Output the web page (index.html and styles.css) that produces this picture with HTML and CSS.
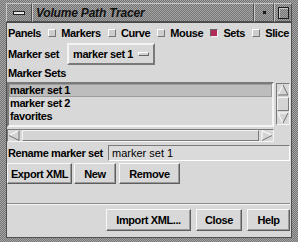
FILE: index.html
```html
<!DOCTYPE html>
<html>
<head>
<title>Volume Path Tracer</title>
<link rel="stylesheet" href="styles.css">
</head>
<body>

<div class="window">
    <div class="titlebar">
        <div class="tb-btn menu-btn"><span class="menu-bar"></span></div>
        <div class="tb-btn title">Volume Path Tracer</div>
        <div class="tb-btn min-btn"><span class="min-dot"></span></div>
        <div class="tb-btn max-btn"><span class="max-box"></span></div>
    </div>

    <div class="content">
        <div class="toggles">
            <span class="lbl">Panels</span>
            <span class="toggle"><span class="check"></span>Markers</span>
            <span class="toggle"><span class="check"></span>Curve</span>
            <span class="toggle"><span class="check"></span>Mouse</span>
            <span class="toggle"><span class="check on"></span>Sets</span>
            <span class="toggle"><span class="check"></span>Slice</span>
        </div>

        <div class="marker-row">
            <span class="lbl marker-lbl">Marker set</span>
            <div class="option-menu">marker set 1<span class="option-bar"></span></div>
        </div>

        <div class="lbl sets-lbl">Marker Sets</div>

        <div class="list-area">
            <ul class="list">
                <li class="selected">marker set 1</li>
                <li>marker set 2</li>
                <li>favorites</li>
            </ul>
            <div class="vscroll">
                <svg class="arrow" width="12" height="12" viewBox="0 0 12 12">
                    <polygon points="6,1 11,11 1,11" fill="#d4d4d4"/>
                    <line x1="6" y1="1" x2="1" y2="11" stroke="#fff"/>
                    <line x1="6" y1="1" x2="11" y2="11" stroke="#707070"/>
                    <line x1="1" y1="11" x2="11" y2="11" stroke="#707070"/>
                </svg>
                <div class="thumb vthumb"></div>
                <svg class="arrow" width="12" height="12" viewBox="0 0 12 12">
                    <polygon points="1,1 11,1 6,11" fill="#d4d4d4"/>
                    <line x1="1" y1="1" x2="11" y2="1" stroke="#fff"/>
                    <line x1="1" y1="1" x2="6" y2="11" stroke="#fff"/>
                    <line x1="11" y1="1" x2="6" y2="11" stroke="#707070"/>
                </svg>
            </div>
        </div>

        <div class="hscroll">
            <svg class="arrow" width="12" height="11" viewBox="0 0 12 11">
                <polygon points="1,5.5 11,1 11,10" fill="#d4d4d4"/>
                <line x1="1" y1="5.5" x2="11" y2="0.5" stroke="#fff"/>
                <line x1="1" y1="5.5" x2="11" y2="10.5" stroke="#707070"/>
                <line x1="11" y1="0.5" x2="11" y2="10.5" stroke="#707070"/>
            </svg>
            <div class="thumb hthumb"></div>
            <svg class="arrow" width="12" height="11" viewBox="0 0 12 11">
                <polygon points="1,1 11,5.5 1,10" fill="#d4d4d4"/>
                <line x1="1" y1="0.5" x2="1" y2="10.5" stroke="#fff"/>
                <line x1="1" y1="0.5" x2="11" y2="5.5" stroke="#fff"/>
                <line x1="11" y1="5.5" x2="1" y2="10.5" stroke="#707070"/>
            </svg>
        </div>

        <div class="rename-row">
            <span class="lbl rename-lbl">Rename marker set</span>
            <div class="field">marker set 1</div>
        </div>

        <div class="btn-row">
            <button class="btn btn-export">Export XML</button>
            <button class="btn btn-new">New</button>
            <button class="btn btn-remove">Remove</button>
        </div>

        <div class="separator"></div>

        <div class="bottom-row">
            <button class="btn btn-import">Import XML...</button>
            <button class="btn btn-close">Close</button>
            <button class="btn btn-help">Help</button>
        </div>
    </div>
</div>

</body>
</html>
```

FILE: styles.css
```css
/* Motif style dialog */
body {
    margin: 0;
    font-family: "Liberation Sans", Arial, sans-serif;
    font-size: 11px;
    font-weight: bold;
    letter-spacing: -0.4px;
    color: #000;
}

.window {
    width: 298px;
    height: 242px;
    box-sizing: border-box;
    padding: 3px 6px 4px 6px;
    display: flex;
    flex-direction: column;
    background-color: #8c8c8c;
    background-image: repeating-conic-gradient(#747474 0 25%, #a6a6a6 0 50%);
    background-size: 2px 2px;
}

/* title bar */
.titlebar {
    height: 20px;
    display: flex;
    border-bottom: 1px solid #4a4a4a;
    box-sizing: border-box;
}

.tb-btn {
    box-sizing: border-box;
    border: 1px solid;
    border-color: #c8c8c8 #505050 #505050 #c8c8c8;
    display: flex;
    align-items: center;
    justify-content: center;
}

.menu-btn {
    width: 26px;
}

.menu-bar {
    width: 12px;
    height: 4px;
    box-sizing: border-box;
    border: 1px solid;
    border-color: #202020;
    background: #e8e8e8;
}

.title {
    flex: 1;
    justify-content: flex-start;
    padding-left: 3px;
    font-size: 12px;
    font-style: italic;
    letter-spacing: -0.2px;
    color: #111;
}

.min-btn {
    width: 20px;
}

.min-dot {
    width: 3px;
    height: 3px;
    background: #1a1a1a;
}

.max-btn {
    width: 18px;
}

.max-box {
    width: 11px;
    height: 12px;
    box-sizing: border-box;
    border: 1px solid #1a1a1a;
    box-shadow: inset 1px 1px #c8c8c8;
}

/* main area */
.content {
    flex: 1;
    background: #d8d8d8;
    display: flex;
    flex-direction: column;
    padding-right: 1px;
    border: 1px solid #505050;
    border-top: none;
}

.lbl {
    padding-left: 1px;
}

.toggles {
    height: 20px;
    display: flex;
    align-items: center;
    justify-content: space-between;
    padding-right: 1px;
}

.toggle {
    display: flex;
    align-items: center;
    gap: 5px;
}

.check {
    width: 8px;
    height: 8px;
    box-sizing: border-box;
    border: 1px solid;
    border-color: #fff #777 #777 #fff;
    background: #cdcdcd;
}

.check.on {
    border-color: #666 #f4f4f4 #f4f4f4 #666;
    background: #b22a5a;
}

.marker-row {
    height: 22px;
    display: flex;
    align-items: center;
}

.marker-lbl {
    width: 59px;
}

.option-menu {
    width: 88px;
    height: 22px;
    box-sizing: border-box;
    border: 2px solid;
    border-color: #f4f4f4 #7a7a7a #7a7a7a #f4f4f4;
    display: flex;
    align-items: center;
    justify-content: space-between;
    padding: 0 4px;
}

.option-bar {
    width: 11px;
    height: 4px;
    box-sizing: border-box;
    border: 1px solid;
    border-color: #fff #666 #666 #fff;
    background: #d0d0d0;
}

.sets-lbl {
    height: 17px;
    line-height: 17px;
}

/* list with scrollbars */
.list-area {
    height: 45px;
    display: flex;
}

.list {
    width: 267px;
    box-sizing: border-box;
    margin: 0;
    padding: 0;
    list-style: none;
    border: 2px solid;
    border-color: #7a7a7a #f4f4f4 #f4f4f4 #7a7a7a;
}

.list li {
    height: 13px;
    line-height: 13px;
    padding-left: 1px;
}

.list li.selected {
    background: #bdbdbd;
    box-shadow: inset 0 0 0 1px #9c9c9c;
}

.vscroll {
    width: 14px;
    height: 42px;
    margin: 1px 0 0 2px;
    box-sizing: border-box;
    border: 1px solid;
    border-color: #7a7a7a #f4f4f4 #f4f4f4 #7a7a7a;
    display: flex;
    flex-direction: column;
}

.arrow {
    display: block;
    flex: none;
}

.thumb {
    flex: 1;
    box-sizing: border-box;
    border: 1px solid;
    border-color: #f4f4f4 #7a7a7a #7a7a7a #f4f4f4;
    background: #d4d4d4;
}

.vthumb {
    margin: 1px 0;
}

.hscroll {
    width: 267px;
    height: 13px;
    margin-top: 2px;
    box-sizing: border-box;
    border: 1px solid;
    border-color: #7a7a7a #f4f4f4 #f4f4f4 #7a7a7a;
    display: flex;
}

.hthumb {
    margin: 0 2px;
}

.rename-row {
    height: 18px;
    margin-top: 2px;
    display: flex;
    align-items: center;
}

.rename-lbl {
    width: 100px;
}

.field {
    flex: 1;
    height: 16px;
    line-height: 14px;
    box-sizing: border-box;
    border: 1px solid;
    border-color: #7a7a7a #fff #fff #7a7a7a;
    background: #dadada;
    padding-left: 3px;
    font-weight: normal;
    letter-spacing: 0;
}

/* push buttons */
.btn {
    box-sizing: border-box;
    padding: 0;
    font-family: "Liberation Sans", Arial, sans-serif;
    font-size: 11px;
    font-weight: bold;
    letter-spacing: -0.4px;
    color: #000;
    background: #d8d8d8;
    border: 1px solid;
    border-color: #f8f8f8 #5e5e5e #5e5e5e #f8f8f8;
    box-shadow: inset -1px -1px #9a9a9a;
}

.btn-row {
    height: 21px;
    margin-top: 1px;
    display: flex;
}

.btn-row .btn {
    height: 21px;
}

.btn-export {
    width: 65px;
}

.btn-new {
    width: 42px;
    margin-left: 2px;
}

.btn-remove {
    width: 61px;
    margin-left: 3px;
}

.separator {
    margin-top: auto;
    height: 2px;
    box-sizing: border-box;
    border-top: 1px solid #8a8a8a;
    border-bottom: 1px solid #f4f4f4;
}

.bottom-row {
    height: 22px;
    margin: 4px 0 6px 0;
    display: flex;
    justify-content: flex-end;
    gap: 5px;
}

.bottom-row .btn {
    height: 22px;
}

.btn-import {
    width: 85px;
}

.btn-close {
    width: 46px;
}

.btn-help {
    width: 43px;
}
```
